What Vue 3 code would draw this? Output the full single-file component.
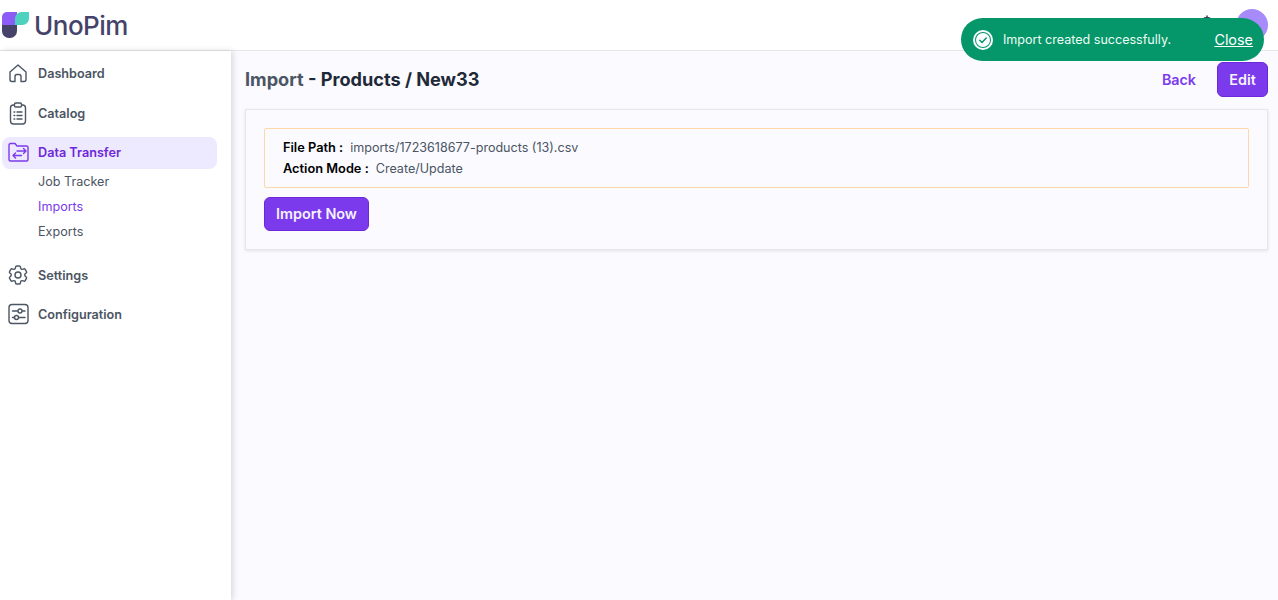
<script setup>
const subItems = [
  { label: 'Job Tracker', active: false },
  { label: 'Imports', active: true },
  { label: 'Exports', active: false },
]
</script>

<template>
  <div class="page">
    <header class="topbar">
      <div class="logo">
        <svg class="logo-mark" width="27" height="26" viewBox="0 0 27 26">
          <path d="M0 5A5 5 0 0 1 5 0H15V13H0Z" fill="#8b5cf6" />
          <path d="M0 13H15V19A7 7 0 0 1 8 26H7A7 7 0 0 1 0 19Z" fill="#45436a" />
          <path d="M13 6.500A6.500 6.500 0 0 1 19.500 0H27V6.500A6.500 6.500 0 0 1 20.500 13H13Z" fill="#4fd1c0" />
        </svg>
        <span class="logo-text">UnoPim</span>
      </div>
      <div class="top-right">
        <svg class="bell" width="22" height="22" viewBox="0 0 22 22" fill="none" stroke="#374151" stroke-width="1.500" stroke-linejoin="round"><path d="M11 1.500v2M11 3.500a6 6 0 0 0-6 6v4l-2 3h16l-2-3v-4a6 6 0 0 0-6-6ZM8.500 16.500a2.500 2.500 0 0 0 5 0" /></svg>
        <div class="avatar"></div>
      </div>
    </header>

    <div class="body">
      <aside class="sidebar">
        <a class="nav-item">
          <svg class="nav-icon" viewBox="0 0 24 24" fill="none" stroke="#4b5563" stroke-width="1.400" stroke-linejoin="round"><path d="M4 11 12 4l8 7v7.500a2 2 0 0 1-2 2h-3v-5a2 2 0 0 0-2-2h-2a2 2 0 0 0-2 2v5H6a2 2 0 0 1-2-2Z" /></svg>
          <span>Dashboard</span>
        </a>
        <a class="nav-item">
          <svg class="nav-icon" viewBox="0 0 24 24" fill="none" stroke="#4b5563" stroke-width="1.400" stroke-linecap="round" stroke-linejoin="round"><rect x="4.500" y="4" width="15" height="19" rx="3" /><rect x="8.500" y="2" width="7" height="4" rx="1.200" fill="#fff" /><path d="M8 11h.8M11 11h5M8 14.500h.8M11 14.500h5M8 18h.8M11 18h5" /></svg>
          <span>Catalog</span>
        </a>
        <div class="group">
          <a class="nav-item active">
            <svg class="nav-icon" viewBox="0 0 24 24" fill="none" stroke="#7c3aed" stroke-width="1.400" stroke-linecap="round" stroke-linejoin="round"><path d="M3 4a1.500 1.500 0 0 1 1.500-1.500h4.500l2 2.500h9.500A1.500 1.500 0 0 1 22 6.500V18.500a1.500 1.500 0 0 1-1.500 1.500h-16A1.500 1.500 0 0 1 3 18.500Z" /><path d="M11 10H20M17.500 7.500 20 10l-2.500 2.500M15.500 14.500H7M9.500 12 7 14.500 9.500 17" /></svg>
            <span>Data Transfer</span>
          </a>
          <div class="sub-list">
            <a v-for="s in subItems" :key="s.label" class="sub-item" :class="{ 'sub-active': s.active }">{{ s.label }}</a>
          </div>
        </div>
        <a class="nav-item">
          <svg class="nav-icon" viewBox="0 0 24 24" fill="none" stroke="#4b5563" stroke-width="1.400" stroke-linejoin="round"><path d="M9.594 3.940c.09-.542.56-.94 1.110-.94h2.593c.55 0 1.020.398 1.110.94l.213 1.281c.063.374.313.686.645.870.074.040.147.083.22.127.325.196.72.257 1.075.124l1.217-.456a1.125 1.125 0 0 1 1.370.49l1.296 2.247a1.125 1.125 0 0 1-.26 1.431l-1.003.827c-.293.241-.438.613-.43.992a7.723 7.723 0 0 1 0 .255c-.008.378.137.75.43.991l1.004.827c.424.35.534.955.26 1.430l-1.298 2.247a1.125 1.125 0 0 1-1.369.491l-1.217-.456c-.355-.133-.75-.072-1.076.124a6.470 6.470 0 0 1-.22.128c-.331.183-.581.495-.644.869l-.213 1.281c-.09.543-.56.94-1.110.94h-2.594c-.55 0-1.019-.398-1.110-.94l-.213-1.281c-.062-.374-.312-.686-.644-.87a6.520 6.520 0 0 1-.22-.127c-.325-.196-.72-.257-1.076-.124l-1.217.456a1.125 1.125 0 0 1-1.369-.49l-1.297-2.247a1.125 1.125 0 0 1 .26-1.431l1.004-.827c.292-.24.437-.613.43-.991a6.932 6.932 0 0 1 0-.255c.007-.38-.138-.751-.43-.992l-1.004-.827a1.125 1.125 0 0 1-.26-1.430l1.297-2.247a1.125 1.125 0 0 1 1.370-.491l1.216.456c.356.133.751.072 1.076-.124.072-.044.146-.086.22-.128.332-.183.582-.495.644-.869l.214-1.280Z" /><circle cx="12" cy="12" r="3" /></svg>
          <span>Settings</span>
        </a>
        <a class="nav-item config">
          <svg class="nav-icon" viewBox="0 0 24 24" fill="none" stroke="#4b5563" stroke-width="1.400" stroke-linecap="round"><rect x="3" y="2.500" width="19" height="19" rx="3" /><path d="M6.500 9h5M16.500 9h2.500M6.500 15.500h1.500M13 15.500h6" /><circle cx="14" cy="9" r="2" /><circle cx="10.500" cy="15.500" r="2" /></svg>
          <span>Configuration</span>
        </a>
      </aside>

      <main class="content">
        <div class="title-row">
          <h1 class="title"><span class="crumb">Import</span> - Products / New33</h1>
          <div class="actions">
            <a class="back">Back</a>
            <button class="btn edit">Edit</button>
          </div>
        </div>
        <section class="card">
          <div class="notice">
            <p class="line"><b>File Path :</b><span>imports/1723618677-products (13).csv</span></p>
            <p class="line"><b>Action Mode :</b><span>Create/Update</span></p>
          </div>
          <button class="btn import">Import Now</button>
        </section>
      </main>
    </div>

    <div class="toast">
      <svg class="toast-icon" width="22" height="22" viewBox="0 0 22 22" fill="none"><circle cx="11" cy="11" r="10" fill="#fff" /><circle cx="11" cy="11" r="8" fill="#059669" /><circle cx="11" cy="11" r="7" fill="#fff" /><path d="M7.800 11.300l2.200 2.200 4.200-4.500" stroke="#059669" stroke-width="1.500" stroke-linecap="round" stroke-linejoin="round" /></svg>
      <span class="toast-msg">Import created successfully.</span>
      <a class="toast-close">Close</a>
    </div>
  </div>
</template>

<style>
html, body { margin: 0; background: #fff; }
</style>

<style scoped>
.page {
  position: relative;
  width: 1278px;
  height: 600px;
  overflow: hidden;
  font-family: Inter, "Liberation Sans", sans-serif;
  background: #fff;
}
.topbar {
  height: 50px;
  display: flex;
  align-items: center;
  justify-content: space-between;
  padding: 0 10px 0 2px;
  border-bottom: 1px solid #e5e7eb;
  background: #fff;
}
.logo { display: flex; align-items: center; gap: 5px; height: 50px; }
.logo-text {
  font-family: Inter, sans-serif;
  font-size: 26px;
  font-weight: 500;
  color: #45436a;
  letter-spacing: -0.5px;
}
.top-right { display: flex; align-items: center; gap: 18px; }
.avatar { width: 32px; height: 32px; border-radius: 50%; background: #a78bfa; }
.body { display: flex; height: 549px; }
.sidebar {
  width: 231px;
  flex: none;
  padding-top: 6px;
  box-sizing: border-box;
  background: #fff;
  box-shadow: 2px 0 6px rgba(0, 0, 0, 0.14);
  display: flex;
  flex-direction: column;
  align-items: flex-start;
  gap: 8px;
  position: relative;
}
.nav-item {
  width: 215px;
  margin-left: 2px;
  height: 32px;
  box-sizing: border-box;
  padding-left: 4px;
  border-radius: 8px;
  display: flex;
  align-items: center;
  gap: 8px;
  font-size: 12.65px;
  font-weight: 600;
  color: #4b5563;
}
.nav-icon { width: 24px; height: 24px; flex: none; }
.active { background: #ede9fe; color: #6d28d9; padding-bottom: 1px; }
.config { margin-top: -1px; }
.group { display: flex; flex-direction: column; }
.sub-list { display: flex; flex-direction: column; padding: 0 0 0 38px; margin-bottom: 7px; }
.sub-item { height: 25px; line-height: 25px; font-size: 12.6px; color: #4b5563; }
.sub-active { color: #7c3aed; }
.content { flex: 1; background: #fafaff; padding: 10px 10px 0 14px; min-width: 0; }
.title-row { display: flex; align-items: center; justify-content: space-between; height: 36px; }
.title { margin: 0; font-size: 18.15px; font-weight: 700; color: #1f2937; }
.crumb { color: #4b5563; }
.actions { display: flex; align-items: center; gap: 21px; }
.back { font-size: 14.3px; font-weight: 600; color: #7c3aed; }
.btn {
  font-family: inherit;
  font-weight: 600;
  font-size: 14.4px;
  color: #f5f3ff;
  background: #7c3aed;
  border: 1px solid #6d28d9;
  border-radius: 6px;
  padding: 0;
}
.edit { width: 51px; height: 35px; }
.card {
  margin-top: 12px;
  height: 141px;
  box-sizing: border-box;
  padding: 18px 18px 0;
  background: #fafaff;
  border: 1px solid #e5e7eb;
  box-shadow: 0 1px 3px rgba(0, 0, 0, 0.1);
}
.notice {
  height: 60px;
  box-sizing: border-box;
  padding: 8px 18px;
  border: 1px solid #fed7aa;
  border-radius: 2px;
}
.line { margin: 0; height: 21px; display: flex; align-items: center; gap: 7px; font-size: 12.56px; color: #4b5563; }
.line b { font-weight: 600; font-size: 12.8px; color: #000; }
.import { display: block; margin-top: 9px; width: 105px; height: 34px; padding-bottom: 2px; }
.toast {
  position: absolute;
  left: 961px;
  top: 18px;
  width: 303px;
  height: 43px;
  box-sizing: border-box;
  padding: 0 11px;
  border-radius: 22px;
  background: #059669;
  display: flex;
  align-items: center;
  color: #fff;
}
.toast-icon { flex: none; }
.toast-msg { margin-left: 9px; font-size: 12.56px; color: #ecfdf5; flex: 1; }
.toast-close { font-size: 14.4px; text-decoration: underline; color: #fff; }
</style>
